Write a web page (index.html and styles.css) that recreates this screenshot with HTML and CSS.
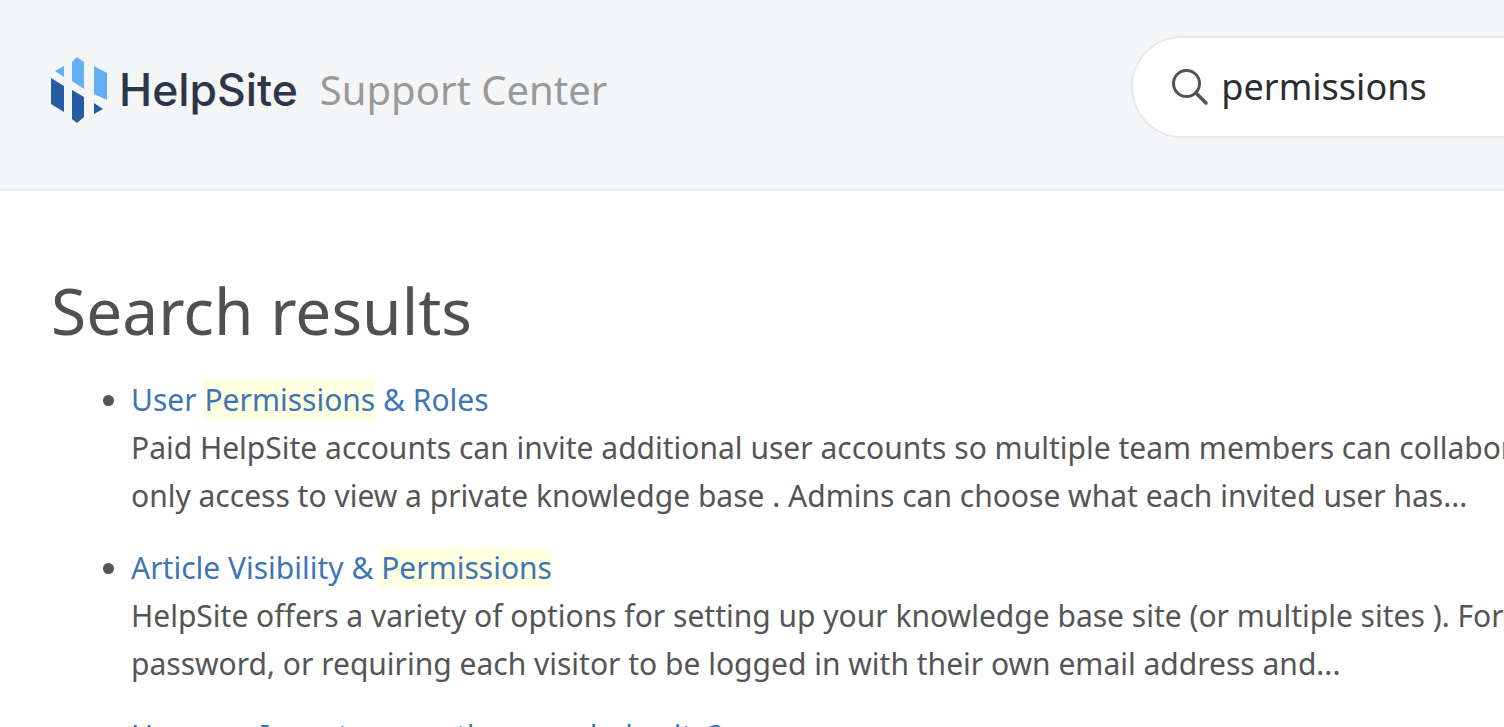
FILE: index.html
```html
<!DOCTYPE html>
<html lang="en">
<head>
<meta charset="utf-8">
<title>Search results - HelpSite Support Center</title>
<link rel="stylesheet" href="styles.css">
</head>
<body>
<div class="page">
<header class="header">
  <a class="brand" href="#">
    <svg class="logo" width="58" height="68" viewBox="0 0 58 68" aria-hidden="true">
      <path fill="#64aef3" d="M5 15 L14 10 V21 Z"/>
      <path fill="#64aef3" d="M22 6 L27 1 L34 6 V33 L22 25 Z"/>
      <path fill="#64aef3" d="M44 10 L57 17 V44 L44 38 Z"/>
      <path fill="#265ca3" d="M1 22 L14 30 V56 L1 48 Z"/>
      <path fill="#265ca3" d="M22 34 L34 41 V61 L27 67 L22 63 Z"/>
      <path fill="#265ca3" d="M44 47 L53 53 L44 58 Z"/>
    </svg>
    <span class="wordmark">HelpSite</span>
  </a>
  <span class="center">Support Center</span>
  <form class="search">
    <svg class="search-icon" width="38" height="38" viewBox="0 0 38 38" aria-hidden="true">
      <circle cx="15.500" cy="15.500" r="13" fill="none" stroke="#4d5358" stroke-width="3"/>
      <path d="M25 25 L35 35" fill="none" stroke="#4d5358" stroke-width="3.500" stroke-linecap="round"/>
    </svg>
    <span class="query">permissions</span>
  </form>
</header>
<main class="main">
  <h1 class="title">Search results</h1>
  <ul class="results">
    <li class="result">
      <a class="link" href="#">User <mark class="hit">Permissions</mark> &amp; Roles</a><br>
      Paid HelpSite accounts can invite additional user accounts so multiple team members can collaborate on a knowledge base, or grant read-<br>
      only access to view a private knowledge base . Admins can choose what each invited user has...
    </li>
    <li class="result">
      <a class="link" href="#">Article Visibility &amp; <mark class="hit">Permissions</mark></a><br>
      HelpSite offers a variety of options for setting up your knowledge base site (or multiple sites ). For example, setting a<br>
      password, or requiring each visitor to be logged in with their own email address and...
    </li>
    <li class="result">
      <a class="link" href="#">How can I create more than one help site?</a>
    </li>
  </ul>
</main>
</div>
</body>
</html>
```
FILE: styles.css
```css
html, body {
  margin: 0;
  height: 100%;
  overflow: hidden;
  background: #fff;
}
.page {
  width: 2200px;
  font-family: "Noto Sans", "Open Sans", sans-serif;
  color: #555;
}
.header {
  display: flex;
  align-items: center;
  height: 179px;
  padding-left: 50px;
  padding-bottom: 10px;
  background: #f4f5f7;
  border-bottom: 2px solid #e6e8eb;
}
.brand {
  display: flex;
  align-items: center;
  gap: 11px;
  text-decoration: none;
}
.logo {
  flex: none;
}
.wordmark {
  font-family: "Inter", sans-serif;
  font-size: 44.5px;
  font-weight: 500;
  color: #2c3648;
}
.center {
  margin-left: 22px;
  font-size: 40px;
  color: #999;
}
.search {
  display: flex;
  align-items: center;
  gap: 12px;
  box-sizing: border-box;
  width: 900px;
  height: 102px;
  margin-left: 524px;
  margin-top: -6px;
  padding-left: 38px;
  background: #fff;
  border: 2px solid #e6e8eb;
  border-radius: 51px;
}
.query {
  font-size: 36px;
  color: #2a2e32;
}
.main {
  padding: 0 50px;
}
.title {
  margin: 76px 0 0 1px;
  font-size: 64px;
  font-weight: 400;
  line-height: 88px;
  color: #505050;
}
.results {
  margin: 21px 0 0;
  padding-left: 81px;
  font-size: 30px;
  line-height: 48px;
  white-space: nowrap;
}
.result {
  margin-bottom: 24px;
}
.link {
  color: #3f75b5;
  text-decoration: none;
}
.hit {
  background: #fefee0;
  color: inherit;
}
```
